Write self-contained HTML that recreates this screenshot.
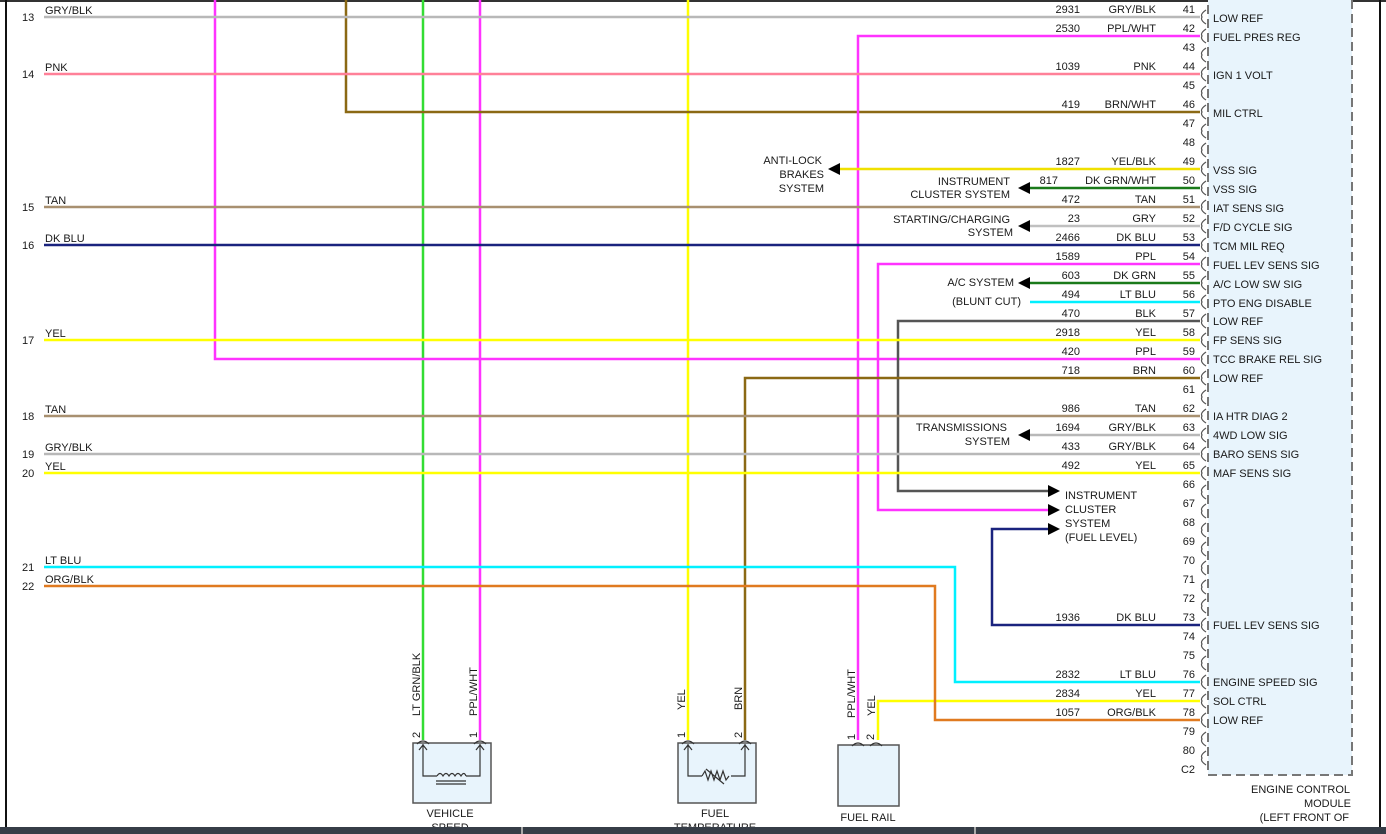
<!DOCTYPE html>
<html><head><meta charset="utf-8"><style>
html,body{margin:0;padding:0;background:#fff;width:1386px;height:834px;overflow:hidden}
svg{display:block}
text{font-family:"Liberation Sans",Arial,sans-serif;font-size:11px;fill:#1a1a1a}
</style></head><body>
<svg width="1386" height="834" viewBox="0 0 1386 834">
<rect x="0" y="0" width="1386" height="2" fill="#333"/>
<rect x="5" y="0" width="2" height="834" fill="#111"/>
<rect x="1379" y="0" width="2" height="834" fill="#111"/>
<!-- module box -->
<rect x="1208" y="-10" width="144" height="785" fill="#e8f4fc" stroke="#777" stroke-width="2" stroke-dasharray="9,5"/>

<g fill="none" stroke-width="2.5">
<!-- verticals from top -->
<path d="M423 0V740" stroke="#33dd33"/>
<path d="M480 0V740" stroke="#ff33ff"/>
<path d="M688 0V740" stroke="#ffff00"/>
<path d="M215 0V359H1200" stroke="#ff33ff"/>
<path d="M346 0V112H1200" stroke="#8b6914"/>
<!-- horizontals -->
<path d="M44 17H1200" stroke="#b8b8b8"/>
<path d="M858 740V36H1200" stroke="#ff33ff"/>
<path d="M44 74H1200" stroke="#ff8098"/>
<path d="M838 169H1200" stroke="#f0e000"/>
<path d="M1028 188H1200" stroke="#1a7a1a"/>
<path d="M44 207H1200" stroke="#a89070"/>
<path d="M1028 226H1200" stroke="#c0c0c0"/>
<path d="M44 245H1200" stroke="#1a237e"/>
<path d="M1050 510H878V264H1200" stroke="#ff33ff"/>
<path d="M1028 283H1200" stroke="#1a7a1a"/>
<path d="M1030 302H1200" stroke="#00f0ff"/>
<path d="M1050 491H898V321H1200" stroke="#555"/>
<path d="M44 340H1200" stroke="#ffff00"/>
<path d="M745 740V378H1200" stroke="#8b6914"/>
<path d="M44 416H1200" stroke="#a89070"/>
<path d="M1028 435H1200" stroke="#b8b8b8"/>
<path d="M44 454H1200" stroke="#b8b8b8"/>
<path d="M44 473H1200" stroke="#ffff00"/>
<path d="M1050 529H992V625H1200" stroke="#1a237e"/>
<path d="M44 567H955V682H1200" stroke="#00f0ff"/>
<path d="M878 740V701H1200" stroke="#ffff00"/>
<path d="M44 586H935V720H1200" stroke="#e07a20"/>
</g>
<!-- arrows -->
<g fill="#000">
<path d="M828 169l12-6v12z"/>
<path d="M1018 188l12-6v12z"/>
<path d="M1018 226l12-6v12z"/>
<path d="M1018 283l12-6v12z"/>
<path d="M1018 435l12-6v12z"/>
<path d="M1060 491l-12-6v12z"/>
<path d="M1060 510l-12-6v12z"/>
<path d="M1060 529l-12-6v12z"/>
</g>
<!-- connector arcs -->
<g fill="none" stroke="#555" stroke-width="1.2">
<path d="M1206 10q-6 4-4 7q-2 3 4 7m0 5q-6 4-4 7q-2 3 4 7m0 5q-6 4-4 7q-2 3 4 7m0 5q-6 4-4 7q-2 3 4 7m0 5q-6 4-4 7q-2 3 4 7m0 5q-6 4-4 7q-2 3 4 7m0 5q-6 4-4 7q-2 3 4 7m0 5q-6 4-4 7q-2 3 4 7m0 5q-6 4-4 7q-2 3 4 7m0 5q-6 4-4 7q-2 3 4 7m0 5q-6 4-4 7q-2 3 4 7m0 5q-6 4-4 7q-2 3 4 7m0 5q-6 4-4 7q-2 3 4 7m0 5q-6 4-4 7q-2 3 4 7m0 5q-6 4-4 7q-2 3 4 7m0 5q-6 4-4 7q-2 3 4 7m0 5q-6 4-4 7q-2 3 4 7m0 5q-6 4-4 7q-2 3 4 7m0 5q-6 4-4 7q-2 3 4 7m0 5q-6 4-4 7q-2 3 4 7m0 5q-6 4-4 7q-2 3 4 7m0 5q-6 4-4 7q-2 3 4 7m0 5q-6 4-4 7q-2 3 4 7m0 5q-6 4-4 7q-2 3 4 7m0 5q-6 4-4 7q-2 3 4 7m0 5q-6 4-4 7q-2 3 4 7m0 5q-6 4-4 7q-2 3 4 7m0 5q-6 4-4 7q-2 3 4 7m0 5q-6 4-4 7q-2 3 4 7m0 5q-6 4-4 7q-2 3 4 7m0 5q-6 4-4 7q-2 3 4 7m0 5q-6 4-4 7q-2 3 4 7m0 5q-6 4-4 7q-2 3 4 7m0 5q-6 4-4 7q-2 3 4 7m0 5q-6 4-4 7q-2 3 4 7m0 5q-6 4-4 7q-2 3 4 7m0 5q-6 4-4 7q-2 3 4 7m0 5q-6 4-4 7q-2 3 4 7m0 5q-6 4-4 7q-2 3 4 7m0 5q-6 4-4 7q-2 3 4 7"/>
</g>
<!-- pin numbers -->
<g text-anchor="end">
<text x="1195" y="13">41</text><text x="1195" y="32">42</text><text x="1195" y="51">43</text><text x="1195" y="70">44</text><text x="1195" y="89">45</text><text x="1195" y="108">46</text><text x="1195" y="127">47</text><text x="1195" y="146">48</text><text x="1195" y="165">49</text><text x="1195" y="184">50</text><text x="1195" y="203">51</text><text x="1195" y="222">52</text><text x="1195" y="241">53</text><text x="1195" y="260">54</text><text x="1195" y="279">55</text><text x="1195" y="298">56</text><text x="1195" y="317">57</text><text x="1195" y="336">58</text><text x="1195" y="355">59</text><text x="1195" y="374">60</text><text x="1195" y="393">61</text><text x="1195" y="412">62</text><text x="1195" y="431">63</text><text x="1195" y="450">64</text><text x="1195" y="469">65</text><text x="1195" y="488">66</text><text x="1195" y="507">67</text><text x="1195" y="526">68</text><text x="1195" y="545">69</text><text x="1195" y="564">70</text><text x="1195" y="583">71</text><text x="1195" y="602">72</text><text x="1195" y="621">73</text><text x="1195" y="640">74</text><text x="1195" y="659">75</text><text x="1195" y="678">76</text><text x="1195" y="697">77</text><text x="1195" y="716">78</text><text x="1195" y="735">79</text><text x="1195" y="754">80</text><text x="1195" y="773">C2</text>
<!-- circuit numbers -->
<text x="1080" y="13">2931</text><text x="1080" y="32">2530</text><text x="1080" y="70">1039</text><text x="1080" y="108">419</text><text x="1080" y="165">1827</text><text x="1058" y="184">817</text><text x="1080" y="203">472</text><text x="1080" y="222">23</text><text x="1080" y="241">2466</text><text x="1080" y="260">1589</text><text x="1080" y="279">603</text><text x="1080" y="298">494</text><text x="1080" y="317">470</text><text x="1080" y="336">2918</text><text x="1080" y="355">420</text><text x="1080" y="374">718</text><text x="1080" y="412">986</text><text x="1080" y="431">1694</text><text x="1080" y="450">433</text><text x="1080" y="469">492</text><text x="1080" y="621">1936</text><text x="1080" y="678">2832</text><text x="1080" y="697">2834</text><text x="1080" y="716">1057</text>
<!-- color names -->
<text x="1156" y="13">GRY/BLK</text><text x="1156" y="32">PPL/WHT</text><text x="1156" y="70">PNK</text><text x="1156" y="108">BRN/WHT</text><text x="1156" y="165">YEL/BLK</text><text x="1156" y="184">DK GRN/WHT</text><text x="1156" y="203">TAN</text><text x="1156" y="222">GRY</text><text x="1156" y="241">DK BLU</text><text x="1156" y="260">PPL</text><text x="1156" y="279">DK GRN</text><text x="1156" y="298">LT BLU</text><text x="1156" y="317">BLK</text><text x="1156" y="336">YEL</text><text x="1156" y="355">PPL</text><text x="1156" y="374">BRN</text><text x="1156" y="412">TAN</text><text x="1156" y="431">GRY/BLK</text><text x="1156" y="450">GRY/BLK</text><text x="1156" y="469">YEL</text><text x="1156" y="621">DK BLU</text><text x="1156" y="678">LT BLU</text><text x="1156" y="697">YEL</text><text x="1156" y="716">ORG/BLK</text>
<!-- systems -->
<text x="822" y="164">ANTI-LOCK</text><text x="824" y="178">BRAKES</text><text x="824" y="192">SYSTEM</text>
<text x="1010" y="185">INSTRUMENT</text><text x="1010" y="198">CLUSTER SYSTEM</text>
<text x="1010" y="223">STARTING/CHARGING</text><text x="1013" y="236">SYSTEM</text>
<text x="1014" y="286">A/C SYSTEM</text>
<text x="1021" y="305">(BLUNT CUT)</text>
<text x="1007" y="431">TRANSMISSIONS</text><text x="1010" y="445">SYSTEM</text>
<text x="1350" y="793">ENGINE CONTROL</text><text x="1351" y="807">MODULE</text><text x="1349" y="821">(LEFT FRONT OF</text>
</g>
<!-- functions -->
<g>
<text x="1213" y="22">LOW REF</text><text x="1213" y="41">FUEL PRES REG</text><text x="1213" y="79">IGN 1 VOLT</text><text x="1213" y="117">MIL CTRL</text><text x="1213" y="174">VSS SIG</text><text x="1213" y="193">VSS SIG</text><text x="1213" y="212">IAT SENS SIG</text><text x="1213" y="231">F/D CYCLE SIG</text><text x="1213" y="250">TCM MIL REQ</text><text x="1213" y="269">FUEL LEV SENS SIG</text><text x="1213" y="288">A/C LOW SW SIG</text><text x="1213" y="307">PTO ENG DISABLE</text><text x="1213" y="325">LOW REF</text><text x="1213" y="344">FP SENS SIG</text><text x="1213" y="363">TCC BRAKE REL SIG</text><text x="1213" y="382">LOW REF</text><text x="1213" y="420">IA HTR DIAG 2</text><text x="1213" y="439">4WD LOW SIG</text><text x="1213" y="458">BARO SENS SIG</text><text x="1213" y="477">MAF SENS SIG</text><text x="1213" y="629">FUEL LEV SENS SIG</text><text x="1213" y="686">ENGINE SPEED SIG</text><text x="1213" y="705">SOL CTRL</text><text x="1213" y="724">LOW REF</text>
<text x="1065" y="499">INSTRUMENT</text><text x="1065" y="513">CLUSTER</text><text x="1065" y="527">SYSTEM</text><text x="1065" y="541">(FUEL LEVEL)</text>
<!-- left labels -->
<text x="45" y="14">GRY/BLK</text><text x="22" y="21">13</text>
<text x="45" y="71">PNK</text><text x="22" y="78">14</text>
<text x="45" y="204">TAN</text><text x="22" y="211">15</text>
<text x="45" y="242">DK BLU</text><text x="22" y="249">16</text>
<text x="45" y="337">YEL</text><text x="22" y="344">17</text>
<text x="45" y="413">TAN</text><text x="22" y="420">18</text>
<text x="45" y="451">GRY/BLK</text><text x="22" y="458">19</text>
<text x="45" y="470">YEL</text><text x="22" y="477">20</text>
<text x="45" y="564">LT BLU</text><text x="22" y="571">21</text>
<text x="45" y="583">ORG/BLK</text><text x="22" y="590">22</text>
</g>
<!-- vertical labels -->
<g>
<text transform="translate(420,716) rotate(-90)">LT GRN/BLK</text>
<text transform="translate(477,716) rotate(-90)">PPL/WHT</text>
<text transform="translate(685,710) rotate(-90)">YEL</text>
<text transform="translate(742,710) rotate(-90)">BRN</text>
<text transform="translate(855,718) rotate(-90)">PPL/WHT</text>
<text transform="translate(875,716) rotate(-90)">YEL</text>
<text transform="translate(420,738) rotate(-90)">2</text>
<text transform="translate(477,738) rotate(-90)">1</text>
<text transform="translate(685,738) rotate(-90)">1</text>
<text transform="translate(742,738) rotate(-90)">2</text>
<text transform="translate(855,740) rotate(-90)">1</text>
<text transform="translate(874,740) rotate(-90)">2</text>
</g>
<!-- components -->
<g fill="#e8f4fc" stroke="#555" stroke-width="1.5">
<rect x="413" y="743" width="78" height="60"/>
<rect x="678" y="743" width="78" height="60"/>
<rect x="838" y="745" width="61" height="61"/>
</g>
<g fill="none" stroke="#333" stroke-width="1.2">
<path d="M417 744q6-6 12 0M474 744q6-6 12 0M682 744q6-6 12 0M739 744q6-6 12 0M852 746q6-6 12 0M870 746q6-6 12 0"/>
<path d="M423 744V776H437M466 776H480V744M419 750l4-5l4 5M476 750l4-5l4 5"/>
<path d="M437 776q3-5 6 0q3-5 6 0q3-5 6 0q3-5 6 0q3-5 5 0"/>
<path d="M436 781H466M436 784H466"/>
<path d="M688 744V776H702M731 776H745V744M684 750l4-5l4 5M741 750l4-5l4 5"/>
<path d="M702 776l3-5l3 9l3-9l3 9l3-9l3 9l3-9l3 9l3-4M706 769l18 15"/>
</g>
<text x="450" y="817" text-anchor="middle">VEHICLE</text>
<text x="450" y="831" text-anchor="middle">SPEED</text>
<text x="715" y="817" text-anchor="middle">FUEL</text>
<text x="715" y="831" text-anchor="middle">TEMPERATURE</text>
<text x="868" y="821" text-anchor="middle">FUEL RAIL</text>
<!-- bottom bar -->
<rect x="0" y="827" width="1386" height="7" fill="#363d47"/>
<rect x="521" y="827" width="2" height="7" fill="#aaa"/>
<rect x="974" y="827" width="2" height="7" fill="#aaa"/>
</svg>
</body></html>
